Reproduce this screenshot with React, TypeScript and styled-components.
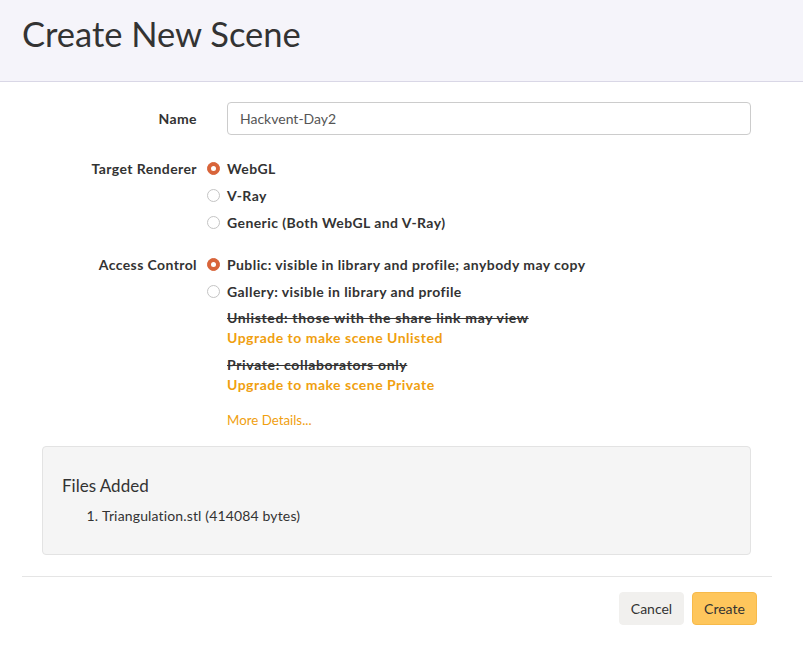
import React from "react";
import styled, { createGlobalStyle } from "styled-components";

const GlobalStyle = createGlobalStyle`
  html, body { margin: 0; padding: 0; background: #fff; }
  body {
    font-family: Lato, "Noto Sans", "DejaVu Sans", sans-serif;
    color: #333;
    font-size: 14px;
  }
  * { box-sizing: border-box; }
`;

const Header = styled.header`
  height: 82px;
  background: #f5f4fa;
  border-bottom: 1px solid #d9d7e6;
  padding: 12px 22px 0;
`;

const Title = styled.h1`
  margin: 0;
  font-size: 34.5px;
  font-weight: 400;
  line-height: 44px;
  color: #333;
`;

const Main = styled.main`
  padding: 20px 31px 0 22px;
`;

const FormGrid = styled.div`
  display: grid;
  grid-template-columns: 175px 524px;
  column-gap: 30px;
`;

const Label = styled.div<{ $h: number; $mt?: number }>`
  text-align: right;
  font-weight: 700;
  font-size: 14px;
  letter-spacing: 0.4px;
  line-height: ${(p) => p.$h}px;
  margin-top: ${(p) => p.$mt ?? 0}px;
`;

const Control = styled.div<{ $mt?: number }>`
  margin-top: ${(p) => p.$mt ?? 0}px;
  display: flex;
  flex-direction: column;
  align-items: flex-start;
`;

const TextInput = styled.input`
  width: 100%;
  height: 33px;
  border: 1px solid #ccc;
  border-radius: 4px;
  padding: 0 12px;
  font-family: inherit;
  font-size: 14px;
  color: #555;
  outline: none;
`;

const Option = styled.label`
  display: flex;
  align-items: center;
  gap: 7px;
  margin-left: -20px;
  height: 27px;
  font-weight: 700;
  font-size: 14px;
  letter-spacing: 0.42px;
  cursor: pointer;
`;

const RadioDot = styled.span<{ $on?: boolean }>`
  width: 13px;
  height: 13px;
  border-radius: 50%;
  flex: none;
  display: flex;
  align-items: center;
  justify-content: center;
  background: ${(p) => (p.$on ? "#d8643a" : "#fff")};
  border: 1px solid ${(p) => (p.$on ? "#d8643a" : "#c4c4c4")};
  &::after {
    content: "";
    width: 5px;
    height: 5px;
    border-radius: 50%;
    background: #fff;
    display: ${(p) => (p.$on ? "block" : "none")};
  }
`;

const Disabled = styled.div<{ $mt: number }>`
  margin-top: ${(p) => p.$mt}px;
  display: flex;
  flex-direction: column;
  align-items: flex-start;
`;

const Struck = styled.span`
  font-weight: 700;
  line-height: 20px;
  letter-spacing: 0.65px;
  text-decoration: line-through;
  color: #333;
`;

const Upgrade = styled.a`
  font-weight: 700;
  line-height: 20px;
  letter-spacing: 0.5px;
  color: #f0a010;
  text-decoration: none;
`;

const More = styled.a`
  margin-top: 15px;
  line-height: 20px;
  font-size: 13.3px;
  color: #f0a010;
  text-decoration: none;
`;

const Panel = styled.section`
  margin: 16px 0 0 20px;
  width: 709px;
  height: 109px;
  background: #f5f5f5;
  border: 1px solid #e3e3e3;
  border-radius: 4px;
  padding: 28px 19px;
`;

const PanelTitle = styled.h4`
  margin: 0 0 9px;
  font-size: 17px;
  font-weight: 400;
  line-height: 22px;
`;

const FileList = styled.ol`
  margin: 0;
  padding-left: 40px;
  font-size: 14px;
  letter-spacing: 0.15px;
  line-height: 20px;
`;

const Rule = styled.hr`
  margin: 21px 0 0;
  border: 0;
  border-top: 1px solid #e5e5e5;
`;

const Footer = styled.div`
  display: flex;
  justify-content: flex-end;
  gap: 8px;
  padding: 15px 15px 0 0;
`;

const Button = styled.button<{ $primary?: boolean }>`
  height: 33px;
  width: 65px;
  border-radius: 4px;
  font-family: inherit;
  font-size: 14px;
  color: #333;
  cursor: pointer;
  background: ${(p) => (p.$primary ? "#fec65c" : "#f1f0ee")};
  border: 1px solid ${(p) => (p.$primary ? "#f7ba4a" : "#f1f0ee")};
`;

export default function App() {
  return (
    <>
      <GlobalStyle />
      <Header>
        <Title>Create New Scene</Title>
      </Header>
      <Main>
        <FormGrid>
          <Label $h={33}>Name</Label>
          <Control>
            <TextInput defaultValue="Hackvent-Day2" />
          </Control>

          <Label $h={27} $mt={20}>Target Renderer</Label>
          <Control $mt={20}>
            <Option><RadioDot $on />WebGL</Option>
            <Option><RadioDot />V-Ray</Option>
            <Option><RadioDot />Generic (Both WebGL and V-Ray)</Option>
          </Control>

          <Label $h={27} $mt={15}>Access Control</Label>
          <Control $mt={15}>
            <Option><RadioDot $on />Public: visible in library and profile; anybody may copy</Option>
            <Option><RadioDot />Gallery: visible in library and profile</Option>
            <Disabled $mt={3}>
              <Struck>Unlisted: those with the share link may view</Struck>
              <Upgrade href="#">Upgrade to make scene Unlisted</Upgrade>
            </Disabled>
            <Disabled $mt={7}>
              <Struck>Private: collaborators only</Struck>
              <Upgrade href="#">Upgrade to make scene Private</Upgrade>
            </Disabled>
            <More href="#">More Details...</More>
          </Control>
        </FormGrid>

        <Panel>
          <PanelTitle>Files Added</PanelTitle>
          <FileList>
            <li>Triangulation.stl (414084 bytes)</li>
          </FileList>
        </Panel>

        <Rule />
        <Footer>
          <Button>Cancel</Button>
          <Button $primary>Create</Button>
        </Footer>
      </Main>
    </>
  );
}
